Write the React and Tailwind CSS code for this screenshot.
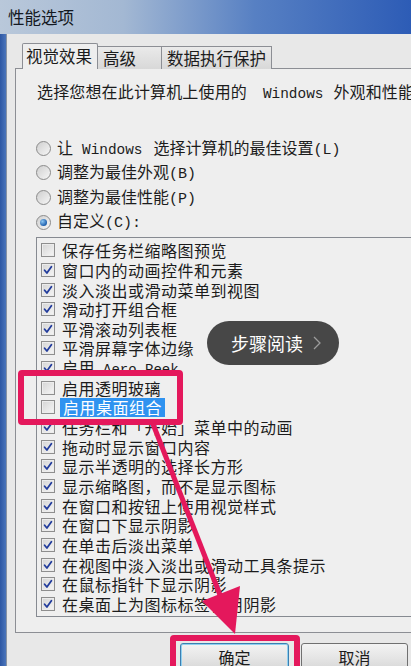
import React from "react";

// list of visual-effect options shown in the listbox
const ITEMS = [
  { label: "保存任务栏缩略图预览", checked: false },
  { label: "窗口内的动画控件和元素", checked: true },
  { label: "淡入淡出或滑动菜单到视图", checked: true },
  { label: "滑动打开组合框", checked: true },
  { label: "平滑滚动列表框", checked: true },
  { label: "平滑屏幕字体边缘", checked: true },
  { label: "启用", latin: "Aero Peek", checked: true },
  { label: "启用透明玻璃", checked: false },
  { label: "启用桌面组合", checked: false, selected: true },
  { label: "任务栏和「开始」菜单中的动画", checked: true },
  { label: "拖动时显示窗口内容", checked: true },
  { label: "显示半透明的选择长方形", checked: true },
  { label: "显示缩略图，而不是显示图标", checked: true },
  { label: "在窗口和按钮上使用视觉样式", checked: true },
  { label: "在窗口下显示阴影", checked: true },
  { label: "在单击后淡出菜单", checked: true },
  { label: "在视图中淡入淡出或滑动工具条提示", checked: true },
  { label: "在鼠标指针下显示阴影", checked: true },
  { label: "在桌面上为图标标签使用阴影", checked: true },
];

const RADIOS = [
  { pre: "让", latin: "Windows", post: "选择计算机的最佳设置", key: "(L)" },
  { pre: "调整为最佳外观", key: "(B)" },
  { pre: "调整为最佳性能", key: "(P)" },
  { pre: "自定义", key: "(C):", on: true },
];

function Radio({ on }) {
  return (
    <span className="relative w-[15px] h-[15px] shrink-0 rounded-full border border-[#8a8a8a] bg-[linear-gradient(135deg,#cfcfcf,#f6f6f6)]">
      {on && (
        <span className="absolute left-[3px] top-[3px] w-[7px] h-[7px] rounded-full bg-[radial-gradient(circle_at_35%_35%,#8cc6f2,#1d5fae_70%)]" />
      )}
    </span>
  );
}

function Check({ checked }) {
  return (
    <span className="relative w-[14px] h-[14px] shrink-0 border border-[#8e8e8e] bg-[linear-gradient(135deg,#d4d4d4,#f6f6f6)] shadow-[inset_0_0_0_1px_#ececec]">
      {checked && (
        <svg width="12" height="12" viewBox="0 0 12 12" className="absolute left-0 top-0">
          <path d="M2.6 6.2 L4.9 9 L9.4 2.8" fill="none" stroke="#223c9c" strokeWidth="1.8" strokeLinecap="round" strokeLinejoin="round" />
        </svg>
      )}
    </span>
  );
}

export default function App() {
  return (
    <div className="relative w-[411px] h-[666px] overflow-hidden bg-[#e8e8e8] font-['Noto_Sans_CJK_SC',sans-serif] text-[#1c1c1c]">
      {/* title bar */}
      <div className="h-[34px] flex items-center pl-[8px] bg-[linear-gradient(90deg,#b9c8da_0%,#a3b8d3_30%,#5780c3_62%,#2d5cb6_100%)]">
        <span className="text-[16.5px] leading-none text-[#141922]">性能选项</span>
      </div>

      <div className="flex h-[632px]">
        {/* left frame */}
        <div className="w-[6px] shrink-0 bg-[linear-gradient(90deg,#2d57a3,#4b75bb)]" />
        <div className="w-px shrink-0 bg-[#8793a4]" />

        <div className="flex-1">
          {/* tabs */}
          <div className="flex items-end pl-[15px] pt-[9px]">
            <div className="relative z-10 h-[26px] w-[76px] border border-b-0 border-[#8c8e94] bg-[#eeeeee] pl-[3px] text-[16.5px] leading-[24px] rounded-t-[2px]">
              视觉效果
            </div>
            <div className="h-[23px] w-[65px] -ml-px border border-b-0 border-[#8c8e94] bg-[linear-gradient(180deg,#eaeaea,#d8d8d8)] pl-[5px] text-[16.5px] leading-[22px]">
              高级
            </div>
            <div className="h-[23px] w-[111px] -ml-px border border-b-0 border-[#8c8e94] bg-[linear-gradient(180deg,#eaeaea,#d8d8d8)] pl-[5px] text-[16.5px] leading-[22px] whitespace-nowrap">
              数据执行保护
            </div>
          </div>

          {/* tab panel */}
          <div className="ml-[8px] -mt-px w-[420px] h-[565px] border border-[#8c8e94] bg-[#eeeeee] pl-[20px] pt-[13px]">
            <div className="ml-px h-[20px] flex items-center whitespace-nowrap text-[16px] tracking-[0.15px]">
              <span>
                选择您想在此计算机上使用的
                <span className="ml-[16px] mr-[10px] font-['Liberation_Mono',monospace] text-[14.4px] tracking-normal">Windows</span>
                外观和性能设置。
              </span>
            </div>

            <div className="mt-[34px]">
              {RADIOS.map((r) => (
                <div key={r.key} className="h-[24.6px] flex items-center gap-[6px] whitespace-nowrap text-[16px]">
                  <Radio on={r.on} />
                  <span>
                    {r.pre}
                    {r.latin && <span className="ml-[9px] mr-[11px] font-['Liberation_Mono',monospace] text-[14.4px]">{r.latin}</span>}
                    {r.post}
                    <span className="font-['Liberation_Mono',monospace] text-[15px]">{r.key}</span>
                  </span>
                </div>
              ))}
            </div>

            {/* effects list */}
            <div className="mt-[3px] w-[400px] border border-[#868a91] bg-[#efefef] py-[2px]">
              {ITEMS.map((it) => (
                <div key={it.label} className="h-[19.67px] flex items-center gap-[7px] pl-[4px] whitespace-nowrap text-[16px] tracking-[0.5px]">
                  <Check checked={it.checked} />
                  <span className={it.selected ? "-ml-[2px] px-[3px] bg-[#2f93f0] text-white leading-[19px]" : ""}>
                    {it.label}
                    {it.latin && <span className="ml-[8px] font-['Liberation_Mono',monospace] text-[14px] tracking-normal">{it.latin}</span>}
                  </span>
                </div>
              ))}
            </div>
          </div>

          {/* dialog buttons */}
          <div className="flex gap-[12px] pl-[173px] pt-[10px]">
            <div className="h-[28px] w-[109px] rounded-[3px] border border-[#3c7fb1] bg-[linear-gradient(180deg,#f3f3f3,#e6e6e6_50%,#d7d7d7)] shadow-[inset_0_0_0_1px_#8fd0f0] flex items-center justify-center text-[16px]">
              确定
            </div>
            <div className="h-[28px] w-[107px] rounded-[3px] border border-[#707070] bg-[linear-gradient(180deg,#f3f3f3,#e6e6e6_50%,#d7d7d7)] flex items-center justify-center text-[16px]">
              取消
            </div>
          </div>
        </div>
      </div>

      {/* annotation overlays */}
      <div className="absolute left-[18px] top-[370px] w-[165px] h-[55px] border-[6px] border-[#e4185c] rounded-[4px]" />
      <div className="absolute left-[170px] top-[635px] w-[130px] h-[40px] border-[6px] border-[#e4185c] rounded-[4px]" />
      <svg className="absolute left-0 top-0 pointer-events-none" width="411" height="666" viewBox="0 0 411 666">
        <line x1="153" y1="424" x2="222" y2="600" stroke="#e4185c" strokeWidth="5" />
        <polygon points="235,634 240,586 202,601" fill="#e4185c" />
      </svg>

      {/* step reading pill */}
      <div className="absolute left-[207px] top-[321px] w-[132px] h-[44px] rounded-full bg-[#474747] flex items-center pl-[24px]">
        <span className="text-[18px] leading-none text-white">步骤阅读</span>
        <svg width="8" height="14" viewBox="0 0 8 14" className="ml-[10px]">
          <path d="M1 1 L7 7 L1 13" fill="none" stroke="#9c9c9c" strokeWidth="1.3" />
        </svg>
      </div>
    </div>
  );
}
